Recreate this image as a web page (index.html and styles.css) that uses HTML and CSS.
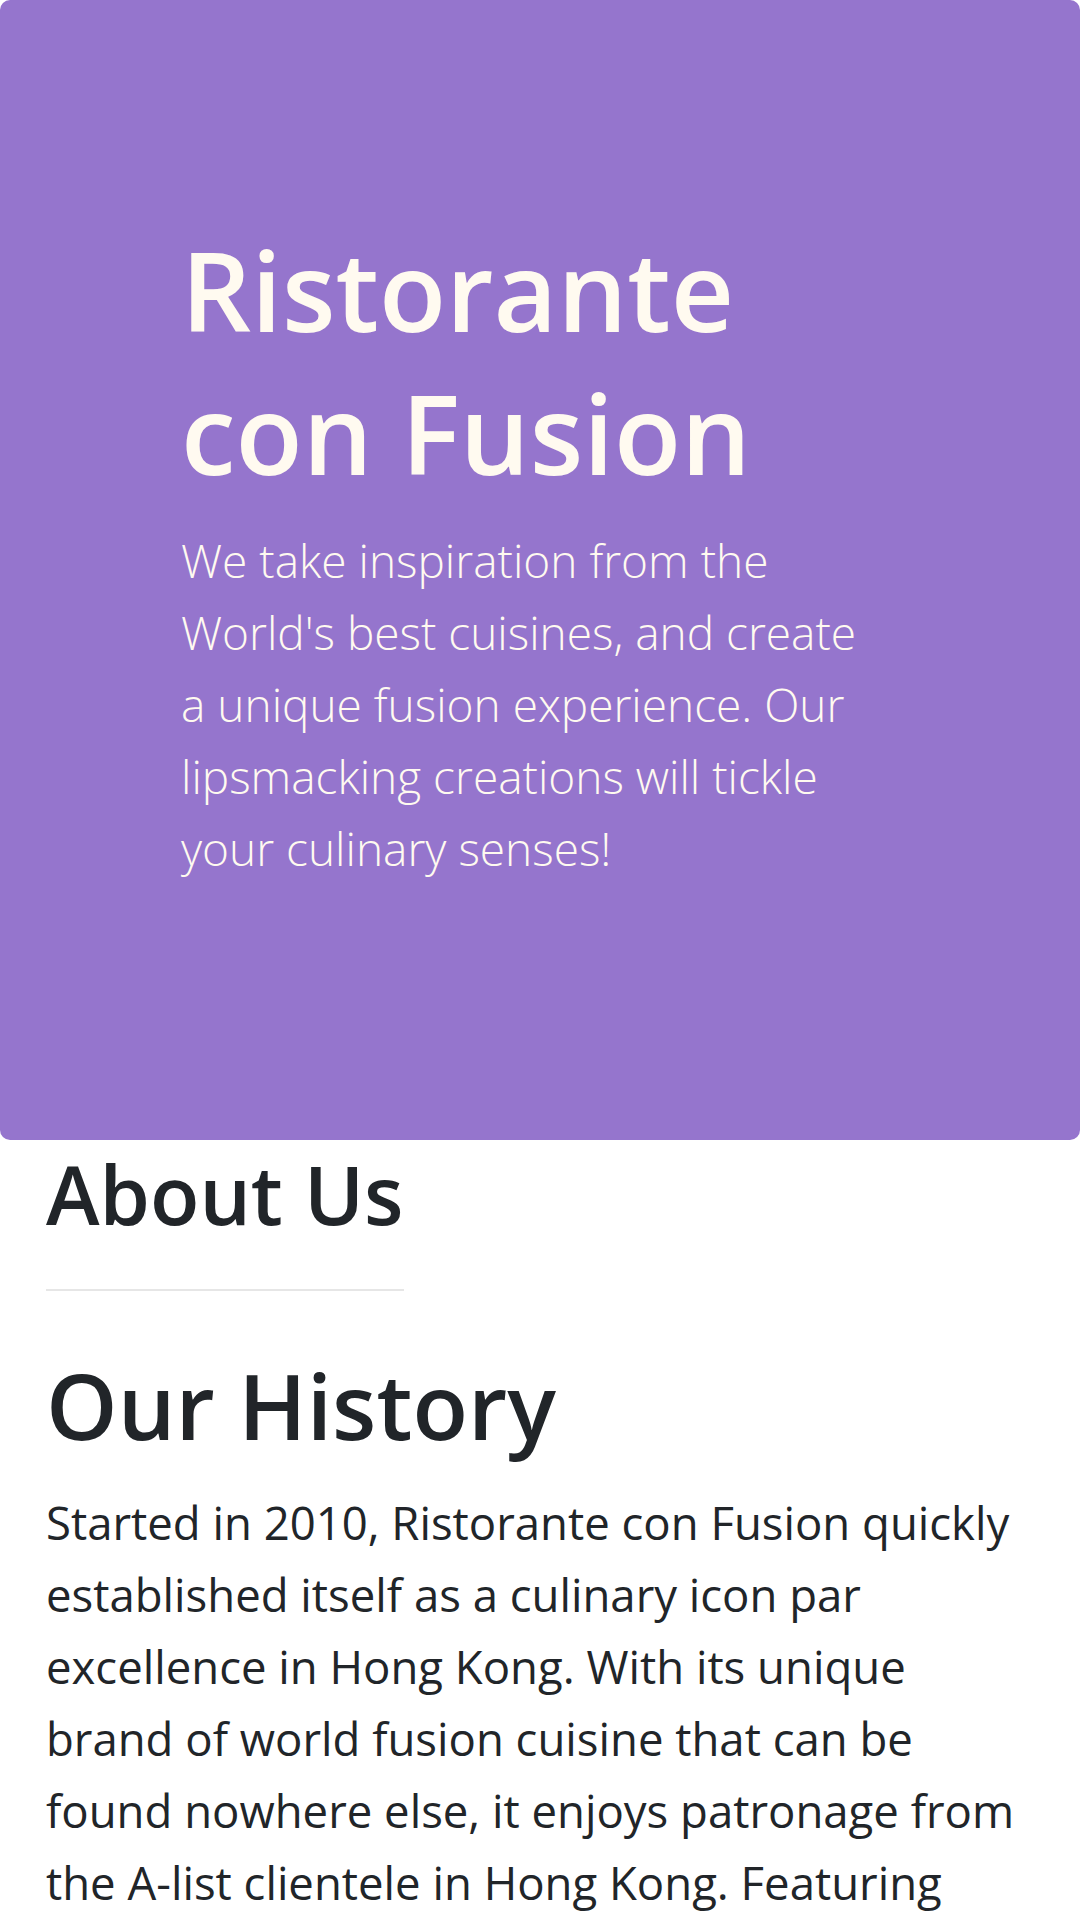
FILE: index.html
```html
<!DOCTYPE html>
<html lang="en">
<head>
<meta charset="utf-8">
<title>Ristorante con Fusion - About Us</title>
<link rel="stylesheet" href="styles.css">
</head>
<body>
<header class="jumbotron">
  <div class="jumbo-inner">
    <h1 class="brand-title">Ristorante con Fusion</h1>
    <p class="lead">We take inspiration from the World's best cuisines, and create a unique fusion experience. Our lipsmacking creations will tickle your culinary senses!</p>
  </div>
</header>
<main class="container">
  <div class="page-heading">
    <h3 class="page-title">About Us</h3>
    <hr class="rule">
  </div>
  <h2 class="section-title">Our History</h2>
  <p class="body-text">Started in 2010, Ristorante con Fusion quickly established itself as a culinary icon par excellence in Hong Kong. With its unique brand of world fusion cuisine that can be found nowhere else, it enjoys patronage from the A-list clientele in Hong Kong. Featuring four of the best three-star Michelin chefs in the world, you never know what will arrive on your plate the next time you visit us.</p>
</main>
</body>
</html>
```
FILE: styles.css
```css
html, body {
  margin: 0;
  padding: 0;
  background: #ffffff;
}

body {
  font-family: "Open Sans", "Noto Sans", "Liberation Sans", sans-serif;
  color: #212529;
}

.jumbotron {
  background: #9575cd;
  color: #fffaf0;
  border-radius: 10px;
  padding: 218px 195px 256px 181px;
}

.brand-title {
  margin: 0;
  font-size: 110px;
  line-height: 143px;
  font-weight: 600;
}

.lead {
  margin: 20px 0 0;
  font-size: 46px;
  line-height: 72px;
  font-weight: 350;
}

.container {
  padding: 0 46px;
}

.page-heading {
  display: inline-block;
  margin-top: 4px;
}

.page-title {
  margin: 0;
  font-size: 81px;
  line-height: 100px;
  font-weight: 600;
}

.rule {
  margin: 45px 0 0;
  border: 0;
  height: 2px;
  background: #e6e6e6;
}

.section-title {
  margin: 54px 0 0;
  font-size: 91px;
  line-height: 110px;
  font-weight: 600;
}

.body-text {
  margin: 26px 0 0;
  font-size: 45.5px;
  line-height: 72px;
  font-weight: 400;
}
```
